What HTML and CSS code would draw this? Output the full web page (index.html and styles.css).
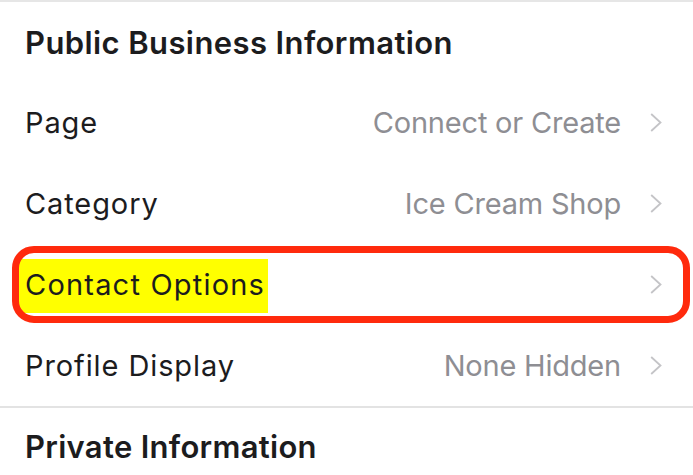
FILE: index.html
```html
<!DOCTYPE html>
<html>
<head>
<meta charset="utf-8">
<link rel="stylesheet" href="styles.css">
</head>
<body>
<div class="screen">
  <div class="section-title">Public Business Information</div>
  <div class="row">
    <span class="label">Page</span>
    <span class="value">Connect or Create</span>
    <svg class="chev" width="12" height="19" viewBox="0 0 12 19"><path d="M1.2 1 L10.5 9.5 L1.2 18" fill="none" stroke="#c4c4c7" stroke-width="1.8"/></svg>
  </div>
  <div class="row">
    <span class="label">Category</span>
    <span class="value">Ice Cream Shop</span>
    <svg class="chev" width="12" height="19" viewBox="0 0 12 19"><path d="M1.2 1 L10.5 9.5 L1.2 18" fill="none" stroke="#c4c4c7" stroke-width="1.8"/></svg>
  </div>
  <div class="row highlighted">
    <span class="label"><span class="marker">Contact Options</span></span>
    <svg class="chev" width="12" height="19" viewBox="0 0 12 19"><path d="M1.2 1 L10.5 9.5 L1.2 18" fill="none" stroke="#c4c4c7" stroke-width="1.8"/></svg>
  </div>
  <div class="row">
    <span class="label">Profile Display</span>
    <span class="value">None Hidden</span>
    <svg class="chev" width="12" height="19" viewBox="0 0 12 19"><path d="M1.2 1 L10.5 9.5 L1.2 18" fill="none" stroke="#c4c4c7" stroke-width="1.8"/></svg>
  </div>
  <div class="divider"></div>
  <div class="section-title second">Private Information</div>
</div>
</body>
</html>
```
FILE: styles.css
```css
html, body {
  margin: 0;
  padding: 0;
  background: #ffffff;
}
body {
  font-family: Inter, "Liberation Sans", sans-serif;
  color: #1c1c1e;
}
.screen {
  width: 693px;
  height: 475px;
  overflow: hidden;
  border-top: 2px solid #e6e6e6;
  box-sizing: border-box;
}
.section-title {
  font-size: 31px;
  font-weight: 600;
  letter-spacing: 0.4px;
  padding: 22px 0 0 25px;
  height: 58px;
  line-height: 38px;
}
.row {
  display: flex;
  align-items: center;
  height: 81px;
  padding: 0 31px 0 25px;
  position: relative;
}
.label {
  flex: 1;
  font-size: 29px;
  letter-spacing: 0.9px;
}
.value {
  font-size: 29px;
  color: #8e8e93;
  letter-spacing: -0.2px;
  margin-right: 29px;
}
.chev {
  display: block;
}
.highlighted::before {
  content: "";
  position: absolute;
  left: 12px;
  right: 3px;
  top: 2px;
  bottom: 2px;
  border: 7px solid #ff2a0d;
  border-radius: 22px;
}
.marker {
  background: #ffff00;
  padding: 8px 3px 11px 7px;
  margin-left: -7px;
  letter-spacing: 1.2px;
}
.divider {
  height: 2px;
  background: #e3e3e3;
}
.second {
  padding-top: 20px;
  letter-spacing: 0.3px;
}
```
